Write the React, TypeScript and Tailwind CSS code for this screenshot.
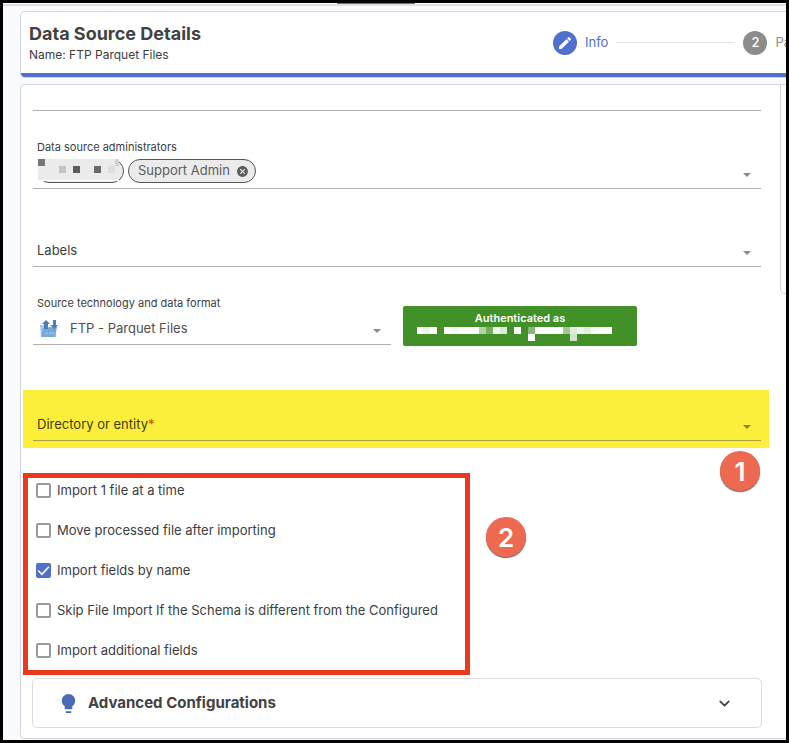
import React, { useState } from 'react';
import { ChevronDown } from 'lucide-react';
import { MdCancel, MdEdit, MdLightbulb } from 'react-icons/md';

interface ImportOption {
  id: string;
  label: string;
  checked: boolean;
}

type Tile = [x: number, y: number, width: number, color: string];

const INITIAL_OPTIONS: ImportOption[] = [
  { id: 'single-file', label: 'Import 1 file at a time', checked: false },
  { id: 'move-processed', label: 'Move processed file after importing', checked: false },
  { id: 'by-name', label: 'Import fields by name', checked: true },
  { id: 'skip-schema', label: 'Skip File Import If the Schema is different from the Configured', checked: false },
  { id: 'additional', label: 'Import additional fields', checked: false },
];

const USER_TILES: Tile[] = [
  [0, 0, 7, '#777777'],
  [21, 7, 7, '#c4c4c4'],
  [35, 7, 7, '#5c5c5c'],
  [56, 7, 7, '#6a6a6a'],
  [70, 7, 7, '#dedede'],
  [77, 0, 4, '#d2d2d2'],
];

const ACCOUNT_TILES: Tile[] = [
  [0, 0, 20, '#ffffff'],
  [6, 0, 7, '#ecf3e9'],
  [27, 0, 35, '#ffffff'],
  [34, 0, 7, '#f5f9f3'],
  [62, 0, 7, '#b1d3a6'],
  [69, 0, 7, '#76af63'],
  [76, 0, 7, '#f1f6ef'],
  [83, 0, 7, '#dcead7'],
  [97, 0, 7, '#ffffff'],
  [111, 0, 7, '#88b978'],
  [118, 0, 28, '#ffffff'],
  [146, 0, 7, '#a1c994'],
  [153, 0, 7, '#e0ecdc'],
  [160, 0, 7, '#eff5ed'],
  [167, 0, 7, '#e3eee0'],
  [174, 0, 7, '#f6faf5'],
  [181, 0, 14, '#ffffff'],
  [111, 7, 7, '#ffffff'],
  [153, 7, 7, '#d2e4cc'],
];

const Tiles: React.FC<{ tiles: Tile[] }> = ({ tiles }) => (
  <>
    {tiles.map(([x, y, width, color]) => (
      <rect key={`${x}-${y}`} x={x} y={y} width={width} height={7} fill={color} />
    ))}
  </>
);

const Caret: React.FC = () => (
  <svg width="8" height="4" viewBox="0 0 8 4" className="shrink-0 pointer-events-none" aria-hidden="true">
    <path d="M0 0h8L4 4z" fill="currentColor" />
  </svg>
);

const FtpIcon: React.FC = () => (
  <svg width="18" height="18" viewBox="0 0 18 18" className="shrink-0" aria-hidden="true">
    <path d="M0 5h6l1 2h9v10H1z" fill="#a3c8ea" />
    <path d="M3 8l14-1-2 10H1z" fill="#74a9dc" />
    <path d="M6 0L10 4H8v5H4V4H2z" fill="#4a7fb4" />
    <path d="M13 0h3v5h2l-3.500 4L10 5h3z" fill="#4a7fb4" />
    <path d="M6 15v-2h2M10 15v-2M9 13h3M13 15v-2h2" stroke="#9cc3e8" strokeWidth="1" fill="none" />
  </svg>
);

const Marker: React.FC<{ value: number; className: string }> = ({ value, className }) => (
  <span
    className={`absolute flex h-10 w-10 items-center justify-center rounded-full bg-[#ed6950] text-[26px] font-semibold text-white shadow-[0_1px_1px_#666] ${className}`}
  >
    {value}
  </span>
);

const App: React.FC = () => {
  const [options, setOptions] = useState(INITIAL_OPTIONS);
  const [advancedOpen, setAdvancedOpen] = useState(false);

  const toggleOption = (id: string) => {
    setOptions(options.map((o) => (o.id === id ? { ...o, checked: !o.checked } : o)));
  };

  return (
    <div className="flex min-h-screen flex-col overflow-hidden border-3 border-black bg-[#f9fafd] font-['Inter',sans-serif] text-[13px] text-[#3c3d3f]">
      <div className="flex h-[3px] border-b-2 border-[#dfe0e4] bg-white">
        <div className="ml-[334px] w-[78px] bg-[#4f6fc9]"></div>
      </div>

      <header className="mt-[5px] ml-[17px] flex items-start rounded-l-[5px] border border-r-0 border-[#d3d6e0] bg-white">
        <div className="flex flex-1 border-b-4 border-[#5070cc] rounded-bl-[4px]">
          <div className="flex-1 pt-[10px] pb-[9px] pl-2">
            <h1 className="text-lg leading-6 font-bold text-[#424242]">Data Source Details</h1>
            <p className="text-xs leading-[18px]">Name: FTP Parquet Files</p>
          </div>
          <ol className="flex w-[233px] items-center overflow-hidden whitespace-nowrap">
            <li className="flex shrink-0 items-center gap-2 text-[#5070cc]">
              <span className="flex h-6 w-6 items-center justify-center rounded-full bg-[#5070cc] text-white">
                <MdEdit size={16} />
              </span>
              Info
            </li>
            <li className="mx-2 h-px w-[119px] shrink-0 bg-[#e2e2e2]" aria-hidden="true"></li>
            <li className="flex shrink-0 items-center gap-2 text-[#8c8c8c]">
              <span className="flex h-6 w-6 items-center justify-center rounded-full bg-[#8c8c8c] font-medium text-white">2</span>
              Pa
            </li>
          </ol>
        </div>
      </header>

      <main className="relative mt-[6px] mb-px ml-[17px] flex flex-1 rounded-l-[5px] border border-r-0 border-[#d3d6e0] bg-white">
        <form className="min-w-0 flex-1 pb-[10px]">
          <div className="mr-[19px] ml-3 h-[26px] border-b border-[#b0b0b0]"></div>

          <div className="mr-[19px] ml-3 border-b border-[#b0b0b0] pt-7 pb-[5px] pl-1">
            <label htmlFor="admins" className="block text-[11px] leading-4">Data source administrators</label>
            <div className="mt-1 flex items-center gap-1 pr-[10px]">
              <span className="flex h-6 w-[87px] rounded-full border border-[#555] bg-[#ebebeb]">
                <svg width="82" height="22" viewBox="0 0 82 22" className="-mt-px -ml-px shrink-0" role="img" aria-label="Hidden administrator">
                  <rect width="82" height="22" fill="#ebebeb" />
                  <path d="M0 0h1v22H0zM0 21h82v1H0z" fill="#ffffff" />
                  <g transform="translate(1 0)">
                    <Tiles tiles={USER_TILES} />
                  </g>
                </svg>
              </span>
              <span className="flex h-6 items-center gap-[6px] rounded-full border border-[#555] bg-[#ebebeb] pr-[6px] pl-[9px] text-[#5c5c5c]">
                Support Admin
                <button type="button" aria-label="Remove Support Admin">
                  <MdCancel size={13} />
                </button>
              </span>
              <input id="admins" type="text" className="min-w-0 flex-1 bg-transparent outline-none" />
              <span className="mt-2 text-[#8a8a8a]"><Caret /></span>
            </div>
          </div>

          <div className="mr-[19px] ml-3 flex items-center border-b border-[#b0b0b0] pt-[51px] pr-[10px] pb-[6px] pl-1">
            <label htmlFor="labels" className="leading-5">Labels</label>
            <select id="labels" className="h-5 min-w-0 flex-1 appearance-none bg-transparent outline-none"></select>
            <span className="mt-[6px] text-[#8a8a8a]"><Caret /></span>
          </div>

          <div className="mr-[19px] ml-3 flex items-end gap-3">
            <div className="w-[358px] border-b border-[#b0b0b0] pt-7 pr-[10px] pb-[5px] pl-1">
              <label htmlFor="source" className="block text-[11px] leading-4">Source technology and data format</label>
              <div className="mt-2 flex h-5 items-center">
                <span className="ml-[3px]"><FtpIcon /></span>
                <select id="source" className="ml-3 min-w-0 flex-1 appearance-none bg-transparent text-[#505050] outline-none">
                  <option>FTP - Parquet Files</option>
                </select>
                <span className="mt-1 text-[#8a8a8a]"><Caret /></span>
              </div>
            </div>
            <button type="button" className="-mb-px h-10 w-[234px] rounded-[2px] bg-[#429128] px-[14px] pb-[2px] text-[11px] font-semibold text-white">
              <span className="block leading-4">Authenticated as</span>
              <svg width="195" height="14" viewBox="0 0 195 14" className="mt-px" role="img" aria-label="Hidden account">
                <Tiles tiles={ACCOUNT_TILES} />
              </svg>
            </button>
          </div>

          <div className="mt-[45px] mr-[11px] ml-[2px] bg-[#fcef3c] pr-2 pb-[7px] pl-[10px]">
            <div className="flex items-center border-b border-[#a9a238] pt-6 pr-[10px] pb-[6px] pl-1 text-[#3c3b17]">
              <label htmlFor="directory" className="leading-5">
                Directory or entity<span className="text-[#d83a1e]">*</span>
              </label>
              <select id="directory" required className="h-5 min-w-0 flex-1 appearance-none bg-transparent outline-none"></select>
              <span className="mt-[6px] text-[#8b8628]"><Caret /></span>
            </div>
          </div>

          <div className="mt-[25px] ml-[2px] flex w-[447px] flex-col gap-[15px] border-5 border-[#eb391e] pb-[7px]">
            {options.map((option) => (
              <label key={option.id} className="flex h-[25px] items-center gap-[6px] pl-2 whitespace-nowrap">
                <span className="relative flex h-[15px] w-[15px]">
                  <input
                    type="checkbox"
                    checked={option.checked}
                    onChange={() => toggleOption(option.id)}
                    className="h-[15px] w-[15px] appearance-none rounded-[2px] border-2 border-[#9a9a9a] bg-white checked:border-[#5070cc] checked:bg-[#5070cc]"
                  />
                  {option.checked && (
                    <svg viewBox="0 0 14 14" className="pointer-events-none absolute inset-0" aria-hidden="true">
                      <path d="M2 7l3.500 3.500L12 3.500" fill="none" stroke="white" strokeWidth="1.500" />
                    </svg>
                  )}
                </span>
                {option.label}
              </label>
            ))}
          </div>

          <button
            type="button"
            aria-expanded={advancedOpen}
            onClick={() => setAdvancedOpen(!advancedOpen)}
            className="mt-[3px] mr-[18px] ml-[11px] flex h-[50px] w-[calc(100%-29px)] items-center rounded-[5px] border border-[#dcdcdc] pr-7 pl-6 text-[15px] font-bold text-[#424242]"
          >
            <MdLightbulb size={23} className="text-[#4b6cb4]" />
            <span className="ml-2 flex-1 text-left">Advanced Configurations</span>
            <ChevronDown size={17} strokeWidth={2.5} />
          </button>
        </form>

        <aside className="h-[209px] w-[6px] rounded-bl-[5px] border-b border-l border-[#d3d6e0]"></aside>

        <Marker value={1} className="top-[366px] right-[26px]" />
        <Marker value={2} className="top-[432px] left-[465px]" />
      </main>
    </div>
  );
};

export default App;
